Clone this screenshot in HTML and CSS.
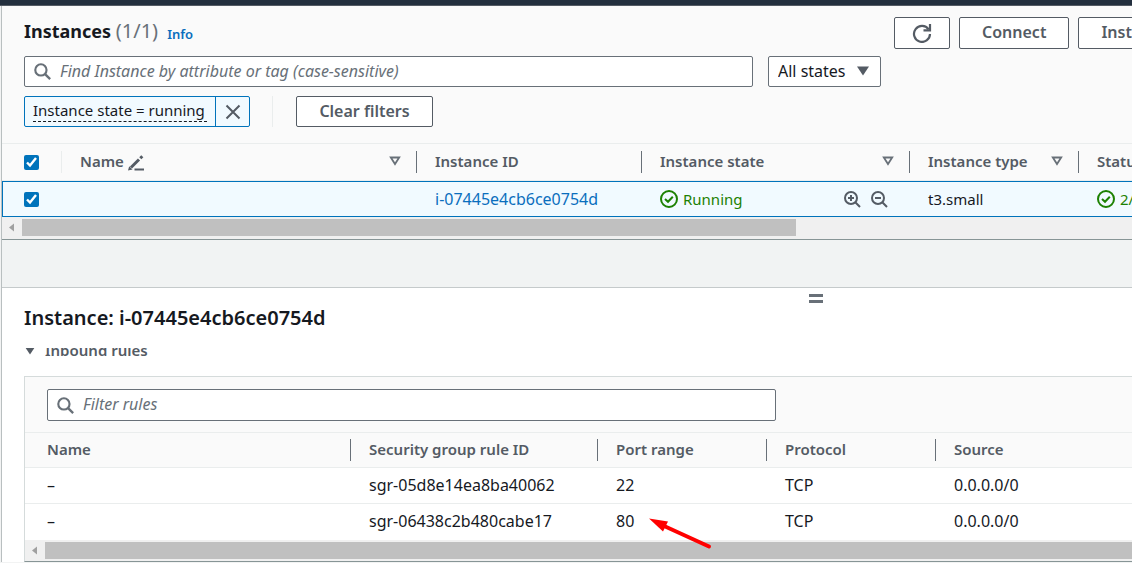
FILE: index.html
```html
<!DOCTYPE html>
<html lang="en">
<head>
<meta charset="utf-8">
<title>Instances</title>
<link rel="stylesheet" href="styles.css">
</head>
<body>
<svg class="defs" aria-hidden="true">
  <symbol id="search" viewBox="0 0 16 16"><circle cx="6.5" cy="6.5" r="5.3" fill="none" stroke="currentColor" stroke-width="2"/><path d="M10.4 10.4 15.2 15.2" stroke="currentColor" stroke-width="2.2"/></symbol>
  <symbol id="down" viewBox="0 0 12 10"><path d="M0 0.5H12L6 9.5Z" fill="currentColor"/></symbol>
  <symbol id="sort" viewBox="0 0 12 10"><path d="M1.8 1.5H10.2L6 8Z" fill="none" stroke="currentColor" stroke-width="1.8"/></symbol>
  <symbol id="ok" viewBox="0 0 18 18"><circle cx="9" cy="9" r="8" fill="none" stroke="currentColor" stroke-width="2"/><path d="M5 9 8 11.8 12.8 6.8" fill="none" stroke="currentColor" stroke-width="2"/></symbol>
</svg>
<header class="topbar"></header>
<main class="app">
  <section class="instances">
    <div class="heading">
      <h1>Instances <span class="count">(1/1)</span></h1>
      <a class="info" href="#">Info</a>
      <div class="actions">
        <button class="btn refresh" aria-label="Refresh"><svg viewBox="0 0 20 20" width="20" height="20"><path d="M16.6 6.4A8 8 0 1 0 18 11" fill="none" stroke="currentColor" stroke-width="2.2"/><path d="M18 1V7.4H11.5" fill="none" stroke="currentColor" stroke-width="2.2"/></svg></button>
        <button class="btn connect">Connect</button>
        <button class="btn state">Instance state</button>
      </div>
    </div>
    <div class="filters">
      <label class="search"><svg class="lens"><use href="#search"/></svg><input type="text" aria-label="Find Instance" placeholder="Find Instance by attribute or tag (case-sensitive)"></label>
      <label class="select"><select aria-label="States"><option>All states</option></select><svg class="caret"><use href="#down"/></svg></label>
    </div>
    <div class="tokens">
      <div class="token"><span class="token-label"><span class="token-text">Instance state = running</span></span><button aria-label="Remove filter"><svg viewBox="0 0 16 16" width="16" height="16"><path d="M1.5 1.5 14.5 14.5M14.5 1.5 1.5 14.5" stroke="currentColor" stroke-width="2"/></svg></button></div>
      <span class="rule"></span>
      <button class="btn clear">Clear filters</button>
    </div>
    <table class="grid list">
      <colgroup><col class="c-check"><col class="c-name"><col class="c-id"><col class="c-state"><col class="c-type"><col></colgroup>
      <thead><tr>
        <th><div class="head soft"><input type="checkbox" aria-label="Select all" checked></div></th>
        <th><div class="head"><span>Name <svg class="pencil" viewBox="0 0 16 16"><path d="M0 15.5 1.2 11.2 4.5 14.4Z" fill="currentColor"/><path d="M3 12.5 11 4.5M12.3 3.2 14.3 1.2" stroke="currentColor" stroke-width="3"/><path d="M6.5 14.5H16" stroke="currentColor" stroke-width="2"/></svg></span><svg class="sort"><use href="#sort"/></svg></div></th>
        <th><div class="head">Instance ID</div></th>
        <th><div class="head">Instance state<svg class="sort"><use href="#sort"/></svg></div></th>
        <th><div class="head">Instance type<svg class="sort"><use href="#sort"/></svg></div></th>
        <th><div class="head last">Status check</div></th>
      </tr></thead>
      <tbody><tr>
        <td><input type="checkbox" aria-label="Select instance" checked></td>
        <td></td>
        <td><a class="id" href="#">i-07445e4cb6ce0754d</a></td>
        <td><div class="cell"><span class="good"><svg class="ok"><use href="#ok"/></svg>Running</span>
          <span class="zooms"><button aria-label="Zoom in"><svg viewBox="0 0 17 17" width="17" height="17"><g fill="none" stroke="currentColor" stroke-width="2"><circle cx="7" cy="7" r="6"/><path d="M11.3 11.3 16 16M4 7H10M7 4V10"/></g></svg></button><button aria-label="Zoom out"><svg viewBox="0 0 17 17" width="17" height="17"><g fill="none" stroke="currentColor" stroke-width="2"><circle cx="7" cy="7" r="6"/><path d="M11.3 11.3 16 16M4 7H10"/></g></svg></button></span></div></td>
        <td>t3.small</td>
        <td><span class="good"><svg class="ok"><use href="#ok"/></svg>2/2 checks</span></td>
      </tr></tbody>
    </table>
    <div class="scrollbar"><svg class="left" viewBox="0 0 5 8"><path d="M5 0V8L0 4Z" fill="currentColor"/></svg><span class="thumb"></span></div>
  </section>
  <div class="split"></div>
  <section class="details">
    <button class="handle" aria-label="Resize panel"></button>
    <h2>Instance: i-07445e4cb6ce0754d</h2>
    <div class="body">
      <button class="toggle"><svg viewBox="0 0 12 10"><use href="#down"/></svg>Inbound rules</button>
      <div class="rules">
        <div class="filters">
          <label class="search"><svg class="lens"><use href="#search"/></svg><input type="text" aria-label="Filter rules" placeholder="Filter rules"></label>
        </div>
        <table class="grid">
          <colgroup><col class="r-name"><col class="r-id"><col class="r-port"><col class="r-port"><col></colgroup>
          <thead><tr>
            <th><div class="head">Name</div></th><th><div class="head">Security group rule ID</div></th><th><div class="head">Port range</div></th><th><div class="head">Protocol</div></th><th><div class="head last">Source</div></th>
          </tr></thead>
          <tbody>
            <tr><td>–</td><td>sgr-05d8e14ea8ba40062</td><td>22</td><td>TCP</td><td>0.0.0.0/0</td></tr>
            <tr><td>–</td><td>sgr-06438c2b480cabe17</td><td class="marked">80<svg class="arrow" viewBox="0 0 64 32"><path d="M14 7.5 60 28.5" stroke="#f00" stroke-width="4" stroke-linecap="round"/><path d="M0 0.5 19 3.5 14 13.5Z" fill="#f00"/></svg></td><td>TCP</td><td>0.0.0.0/0</td></tr>
          </tbody>
        </table>
        <div class="scrollbar"><svg class="left" viewBox="0 0 5 8"><path d="M5 0V8L0 4Z" fill="currentColor"/></svg><span class="thumb full"></span></div>
      </div>
    </div>
  </section>
</main>
</body>
</html>
```
FILE: styles.css
```css
* { box-sizing: border-box; }
body {
  margin: 0;
  overflow: hidden;
  background: #f2f3f3;
  color: #16191f;
  font: 15px/22px "Noto Sans", "Open Sans", sans-serif;
}
button, input, select { font: inherit; color: inherit; }
button { cursor: pointer; }
a { color: #0a6ebd; text-decoration: none; }
h1, h2 { margin: 0; font-size: 18px; line-height: 24px; }
.defs { display: none; }
.topbar { height: 6px; background: #232f3e; border-bottom: 1px solid #545b64; }
.app { margin-left: 1px; border-left: 1px solid #b9bfc0; overflow: hidden; }

.instances { background: #fafafa; border-bottom: 1px solid #879596; }
.heading { display: flex; align-items: center; gap: 9px; padding: 11px 0 0 22px; margin-right: -104px; }
.heading h1 { padding-bottom: 4px; }
.count { color: #687078; font-size: 20px; font-weight: 400; }
.info { font-size: 13px; font-weight: 600; line-height: 28px; padding-top: 1px; }
.actions { display: flex; gap: 9px; margin-left: auto; }
.btn {
  height: 32px;
  padding: 0 22px 2px;
  border: 1px solid #545b64;
  border-radius: 2px;
  background: #fff;
  color: #545b64;
  font-size: 16px;
  font-weight: 600;
  line-height: 26px;
  white-space: nowrap;
}
.refresh { width: 56px; padding: 0; }
.refresh svg { display: block; margin: auto; }
.connect { width: 110px; }
.state { width: 158px; }

.filters { display: flex; gap: 15px; padding: 7px 22px 0; }
.search {
  display: flex;
  align-items: center;
  gap: 9px;
  width: 729px;
  max-width: 100%;
  height: 31px;
  padding: 0 9px;
  border: 1px solid #687078;
  border-radius: 2px;
  background: #fff;
}
.lens { width: 17px; height: 17px; color: #687078; flex: none; }
.search input { flex: 1; min-width: 0; padding: 0 0 2px; border: 0; outline: 0; background: none; font-size: 16px; }
.search input::placeholder { color: #687078; font-style: italic; opacity: 1; }
.select { position: relative; width: 113px; height: 31px; }
.select select {
  appearance: none;
  width: 100%;
  height: 100%;
  padding: 0 9px 2px;
  border: 1px solid #687078;
  border-radius: 2px;
  background: #fff;
  font-size: 16px;
}
.caret { position: absolute; right: 12px; top: 10px; width: 12px; height: 10px; color: #545b64; pointer-events: none; }

.tokens { display: flex; align-items: center; padding: 9px 22px 16px; }
.token { display: flex; height: 31px; border: 1px solid #0073bb; border-radius: 2px; background: #f1faff; }
.token-label { width: 190px; padding: 3px 8px; white-space: nowrap; }
.token-text { display: block; line-height: 21px; border-bottom: 1px dashed #16191f; }
.token button { display: grid; place-items: center; width: 34px; padding: 0; border: 0; border-left: 1px solid #0073bb; background: none; color: #545b64; }
.rule { width: 1px; height: 31px; margin: 0 23px 0 22px; background: #eaeded; }
.clear { width: 137px; height: 31px; }

.grid { width: 100%; table-layout: fixed; border-collapse: separate; border-spacing: 0; }
.grid th { height: 37px; padding: 0; border-top: 1px solid #eaeded; border-bottom: 1px solid #eaeded; background: #fafafa; color: #545b64; font-size: 15px; font-weight: 600; text-align: left; }
.grid td { height: 36px; padding: 0 0 2px 18px; white-space: nowrap; border-bottom: 1px solid #eaeded; }
.grid th:first-child .head, .grid td:first-child { padding-left: 22px; }
.head { display: flex; align-items: center; justify-content: space-between; height: 22px; line-height: 20px; padding: 0 15px 2px 18px; border-right: 1px solid #687078; white-space: nowrap; }
.head.soft { border-color: #eaeded; padding-bottom: 0; }
.head.last { border: 0; }
.grid input { display: block; width: 15px; height: 15px; margin: 0; accent-color: #0073bb; }
.sort { width: 12px; height: 10px; color: #687078; flex: none; }
.pencil { width: 16px; height: 16px; vertical-align: -4px; }
.list { width: calc(100% + 148px); }
.list th { height: 38px; }
.list td { height: 36px; padding-bottom: 0; border-top: 1px solid #0073bb; border-bottom: 1px solid #0073bb; background: #f1faff; }
.list td:first-child { border-left: 1px solid #0073bb; padding-left: 21px; }
.id { font-size: 16px; }
.c-check { width: 60px; }
.c-name { width: 355px; }
.c-id { width: 225px; }
.c-state { width: 268px; }
.c-type { width: 169px; }
.cell { display: flex; align-items: center; justify-content: space-between; padding-right: 22px; }
.good { display: flex; align-items: center; gap: 5px; color: #1d8102; }
.ok { width: 18px; height: 18px; }
.zooms { display: flex; gap: 10px; }
.zooms button { padding: 0; border: 0; background: none; color: #545b64; }
.zooms svg { display: block; }

.scrollbar { display: flex; align-items: center; height: 22px; padding-bottom: 1px; background: #f0f0f0; }
.left { width: 5px; height: 9px; margin: 0 8px 0 7px; color: #a0a0a0; flex: none; }
.thumb { width: 774px; height: 17px; background: #c0c0c0; }
.thumb.full { flex: 1; }

.split { height: 48px; background: #f1f3f3; border-bottom: 1px solid #c5cacb; }

.details { padding-top: 6px; background: #fff; }
.handle { display: block; width: 14px; height: 9px; margin: 0 309px 0 auto; padding: 0; border: solid #687078; border-width: 3px 0; background: none; }
.details h2 { padding: 3px 22px 18px; font-size: 20px; font-weight: 600; }
.body { overflow: hidden; padding-left: 22px; }
.toggle { display: flex; align-items: center; gap: 9px; height: 20px; margin-top: -8px; padding: 0; border: 0; background: none; color: #545b64; font-size: 15px; font-weight: 600; }
.toggle svg { width: 12px; height: 10px; }
.rules { margin-top: 16px; border: 1px solid #d5dbdb; border-right: 0; border-bottom-color: #879596; background: #fafafa; }
.rules .filters { padding: 12px 22px 11px; }
.rules .search { height: 32px; }
.rules td { background: #fff; font-size: 16px; }
.rules th { height: 36px; }
.rules tr:last-child td { border-bottom: 0; }
.rules .scrollbar { height: 21px; }
.r-name { width: 326px; }
.r-id { width: 247px; }
.r-port { width: 169px; }
.marked { position: relative; }
.arrow { position: absolute; left: 51px; top: 14px; width: 64px; height: 32px; z-index: 1; }
```
